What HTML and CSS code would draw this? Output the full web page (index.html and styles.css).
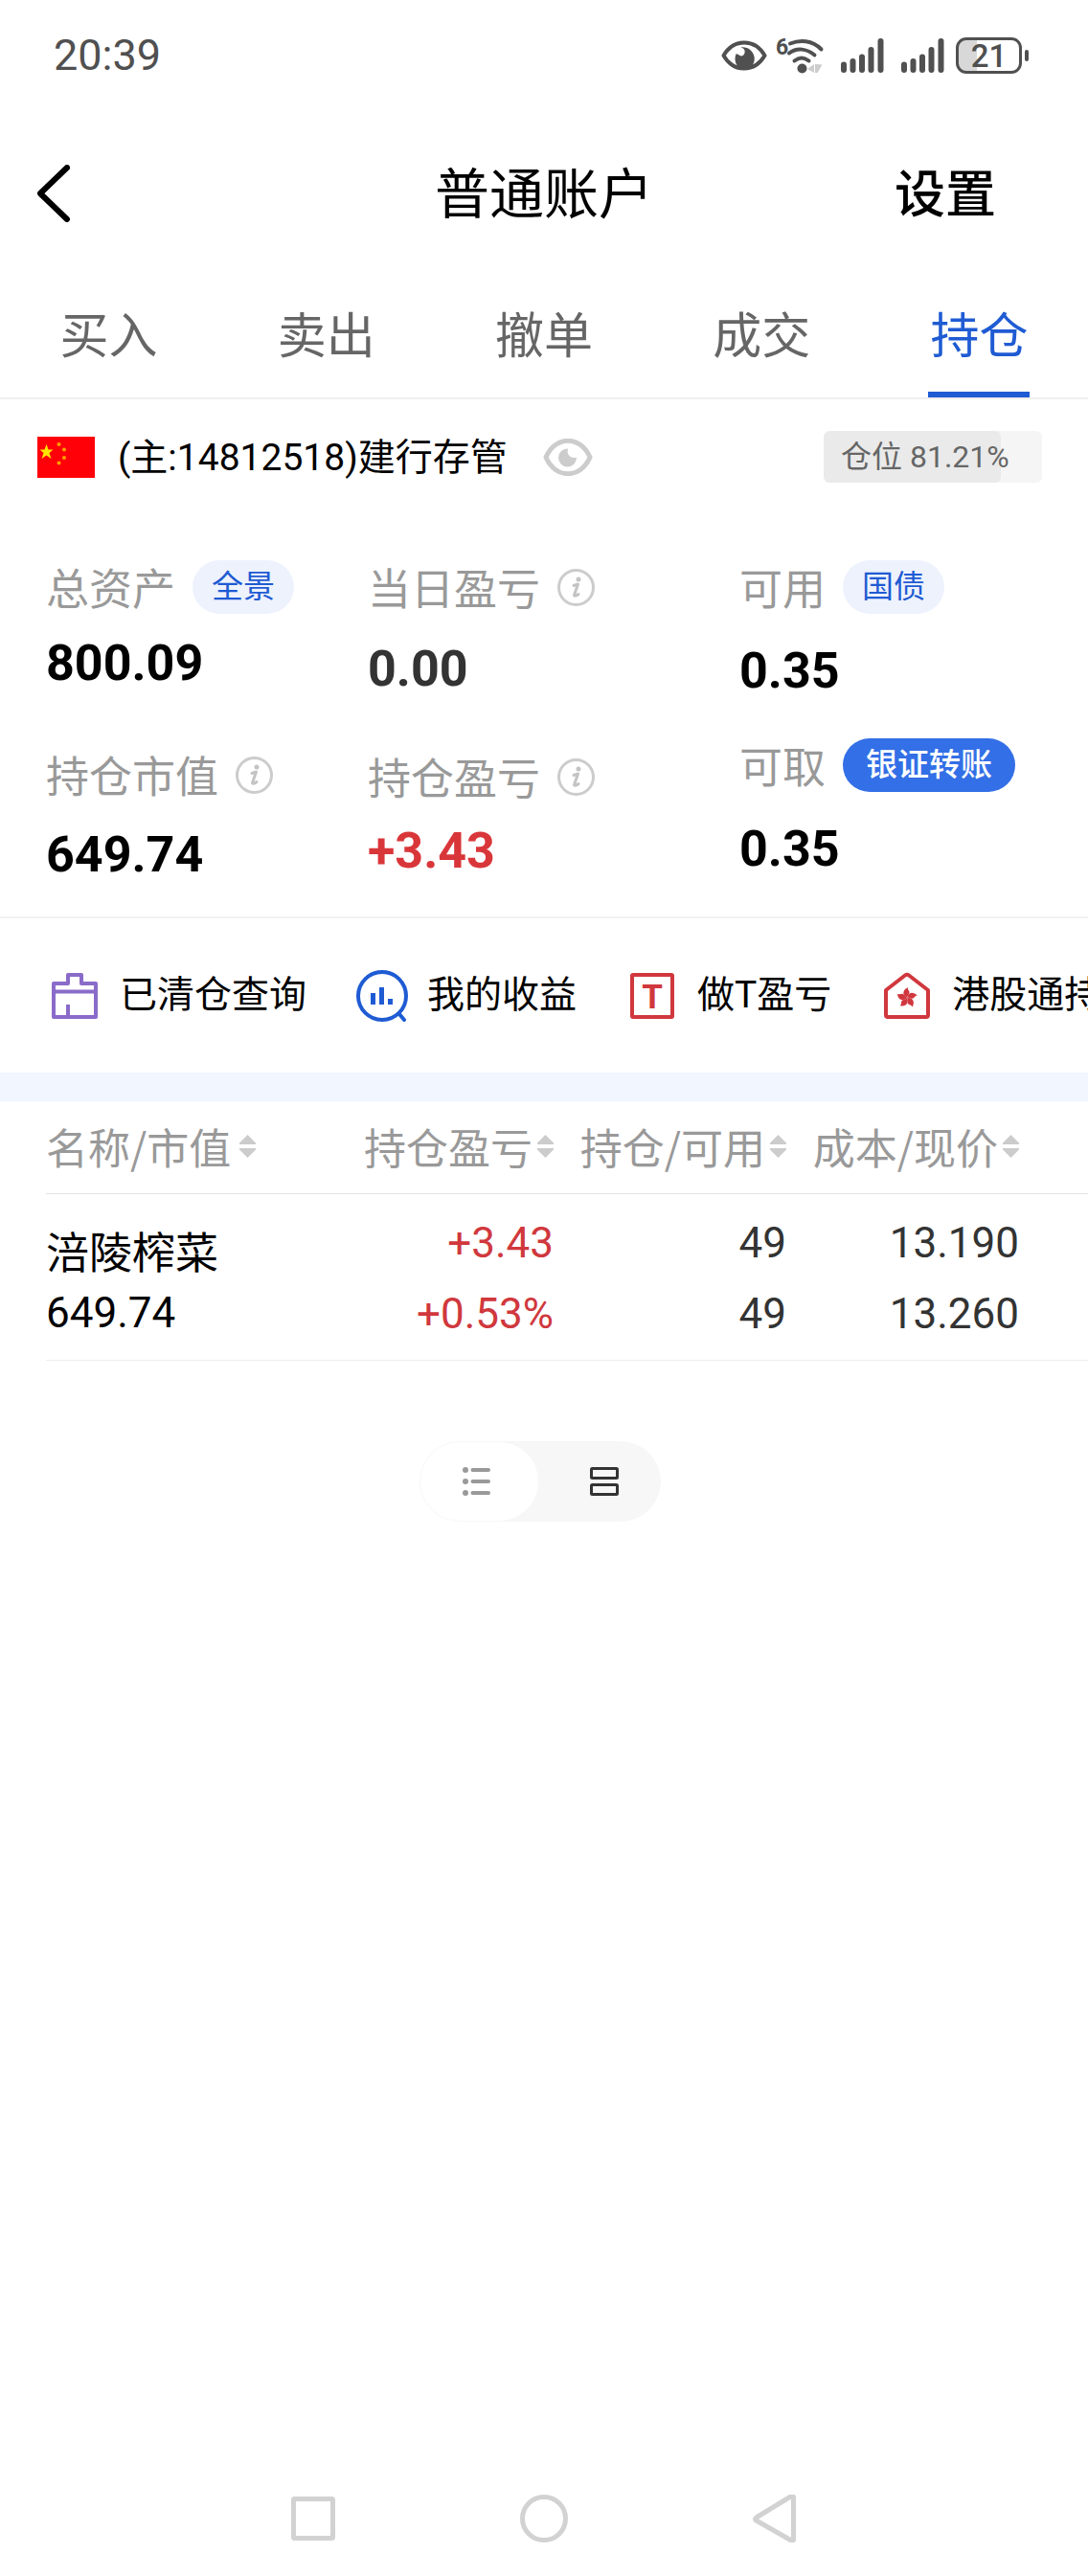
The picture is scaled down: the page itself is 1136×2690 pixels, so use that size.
FILE: index.html
```html
<!DOCTYPE html>
<html lang="zh-CN">
<head>
    <meta charset="UTF-8">
    <meta name="viewport" content="width=device-width, initial-scale=1.0">
    <title>普通账户</title>
    <link rel="stylesheet" href="styles.css">
</head>
<body>
    <!-- Shared icons -->
    <svg class="sprite" aria-hidden="true">
        <symbol id="icon-info" viewBox="0 0 39 39">
            <circle cx="19.5" cy="19.5" r="18" fill="none" stroke="#ccc" stroke-width="3"/>
            <circle cx="22" cy="11" r="2.5" fill="#c4c4c4"/>
            <path d="M17 17.500l4.500-1.500-4 11.500c0 1.500 2.500 .5 4.500-1" fill="none" stroke="#c4c4c4" stroke-width="3" stroke-linecap="round" stroke-linejoin="round"/>
        </symbol>
        <symbol id="icon-sort" viewBox="0 0 17 24">
            <path d="M8.500 0L17 8.500V10H0V8.500zM8.500 24L17 15.500V14H0v1.500z" fill="#ccc"/>
        </symbol>
        <symbol id="icon-signal" viewBox="0 0 45 36">
            <path d="M3 27.500v5.500M12.500 24v9M22 19.500v13.500M31.500 12v21M41.500 3v30" fill="none" stroke="#505050" stroke-width="6" stroke-linecap="round"/>
        </symbol>
    </svg>

    <div class="status-bar">
        <span class="time">20:39</span>
        <div class="status-icons">
            <svg class="status-eye" viewBox="0 0 48 32">
                <path d="M2.500 16C13-2 35-2 45.500 16 35 34 13 34 2.500 16z" fill="none" stroke="#505050" stroke-width="4" stroke-linejoin="round"/>
                <path d="M20.500 7.500c4 1 5 4 3.500 7-1 2-3 2.500-4.500 1.500-2-1-3-2-4-1.500-3 7 1 15.500 8.500 15.500 7 0 12-6 10.500-13-1.500-6-7-10.500-14-9.500z" fill="#505050"/>
            </svg>
            <svg class="status-wifi" viewBox="0 0 50 38">
                <text x="0" y="18" class="wifi-six">6</text>
                <path d="M15 6.500c10-4 23-4 32.500 6" class="wifi-arc"/>
                <path d="M14 16.500c8-6 18-5 26.500 2" class="wifi-arc"/>
                <path d="M19.500 24.500c5-4 10-4 15 0" class="wifi-arc"/>
                <circle cx="27.500" cy="32.500" r="5" fill="#505050"/>
                <path d="M40 28v9l-7-4zM41 28l7.500 .5-5 8.500H41z" fill="#ccc"/>
            </svg>
            <svg class="status-signal"><use href="#icon-signal"/></svg>
            <svg class="status-signal"><use href="#icon-signal"/></svg>
            <div class="battery">
                <span class="battery-body">21</span>
                <span class="battery-cap"></span>
            </div>
        </div>
    </div>

    <header class="header">
        <button class="back" aria-label="返回">
            <svg viewBox="0 0 34 60">
                <path d="M31 3L3 30l28 27" fill="none" stroke="#000" stroke-width="6" stroke-linecap="round" stroke-linejoin="round"/>
            </svg>
        </button>
        <h1>普通账户</h1>
        <a class="settings" href="#">设置</a>
    </header>

    <nav class="tabs">
        <a href="#">买入</a>
        <a href="#">卖出</a>
        <a href="#">撤单</a>
        <a href="#">成交</a>
        <a class="active" href="#" aria-current="page">持仓</a>
    </nav>

    <section class="account">
        <svg class="flag" viewBox="0 0 60 43">
            <rect width="60" height="43" fill="#ff0008"/>
            <path d="M9.500 8l2 5.500h5l-4 3.500 2 6-5-3.500-5 3.500 2-6-4-3.500h5z" fill="#ffe600"/>
            <g fill="#ff9f00">
                <circle cx="22.500" cy="8" r="2"/>
                <circle cx="28" cy="13.500" r="2"/>
                <circle cx="28" cy="22" r="2"/>
                <circle cx="22.500" cy="27.500" r="2"/>
            </g>
        </svg>
        <span class="account-name">(主:14812518)建行存管</span>
        <button class="eye" aria-label="隐藏金额">
            <svg viewBox="0 0 52 39">
                <path d="M3 19.500C13-3.500 39-3.500 49 19.500 39 42.500 13 42.500 3 19.500z" fill="none" stroke="#ccc" stroke-width="5" stroke-linejoin="round"/>
                <path d="M26 10.500a9.500 9.500 0 1 0 9 9c-5 2-11-2-9-9z" fill="#ccc"/>
            </svg>
        </button>
        <div class="position">
            <div class="position-fill" style="width: 81.21%"></div>
            <span class="position-text">仓位 81.21%</span>
        </div>
    </section>

    <section class="summary">
        <div class="column column-total">
            <div class="metric">
                <div class="label">总资产 <button class="pill">全景</button></div>
                <div class="value">800.09</div>
            </div>
            <div class="metric">
                <div class="label">持仓市值 <svg class="info"><use href="#icon-info"/></svg></div>
                <div class="value">649.74</div>
            </div>
        </div>
        <div class="column column-profit">
            <div class="metric">
                <div class="label">当日盈亏 <svg class="info"><use href="#icon-info"/></svg></div>
                <div class="value flat">0.00</div>
            </div>
            <div class="metric">
                <div class="label">持仓盈亏 <svg class="info"><use href="#icon-info"/></svg></div>
                <div class="value up">+3.43</div>
            </div>
        </div>
        <div class="column column-cash">
            <div class="metric">
                <div class="label">可用 <button class="pill">国债</button></div>
                <div class="value">0.35</div>
            </div>
            <div class="metric">
                <div class="label">可取 <button class="pill pill-solid">银证转账</button></div>
                <div class="value">0.35</div>
            </div>
        </div>
    </section>

    <nav class="shortcuts">
        <a href="#">
            <svg viewBox="0 0 54 54">
                <g fill="none" stroke="#8a6bc9" stroke-width="4" stroke-linejoin="round">
                    <path d="M5 14h15V5h14v9h15v35H5z"/>
                    <path d="M5 22.500h44M20 36v13"/>
                </g>
            </svg>
            已清仓查询
        </a>
        <a href="#">
            <svg viewBox="0 0 54 54">
                <circle cx="27" cy="27" r="25" fill="none" stroke="#1f5bd3" stroke-width="4"/>
                <path d="M45 46l5 6" stroke="#1f5bd3" stroke-width="4" stroke-linecap="round"/>
                <path d="M15 24h5v12h-5zM24 18h5v18h-5zM33 30h5v6h-5z" fill="#1f5bd3"/>
            </svg>
            我的收益
        </a>
        <a href="#">
            <svg viewBox="0 0 54 54">
                <rect x="6" y="5" width="42" height="44" rx="1" fill="none" stroke="#d0383d" stroke-width="4"/>
                <text x="27" y="40" class="icon-letter">T</text>
            </svg>
            做T盈亏
        </a>
        <a href="#">
            <svg viewBox="0 0 54 54">
                <path d="M5 21L25 5.500q2-1.500 4 0L49 21v26q0 2-2 2H7q-2 0-2-2z" fill="none" stroke="#d0383d" stroke-width="4" stroke-linejoin="round"/>
                <g fill="#d0383d">
                    <path id="petal" d="M27 29c-5-3-5-8 1-11-1 3 3 4 1 7-1 2-2 2-2 4z"/>
                    <use href="#petal" transform="rotate(72 27 29)"/>
                    <use href="#petal" transform="rotate(144 27 29)"/>
                    <use href="#petal" transform="rotate(216 27 29)"/>
                    <use href="#petal" transform="rotate(288 27 29)"/>
                </g>
            </svg>
            港股通持仓
        </a>
    </nav>

    <main class="holdings">
        <table>
            <thead>
                <tr>
                    <th><button>名称/市值 <svg><use href="#icon-sort"/></svg></button></th>
                    <th><button>持仓盈亏 <svg><use href="#icon-sort"/></svg></button></th>
                    <th><button>持仓/可用 <svg><use href="#icon-sort"/></svg></button></th>
                    <th><button>成本/现价 <svg><use href="#icon-sort"/></svg></button></th>
                </tr>
            </thead>
            <tbody>
                <tr>
                    <td><div class="stock">涪陵榨菜</div><div class="market-value">649.74</div></td>
                    <td class="up"><div>+3.43</div><div>+0.53%</div></td>
                    <td><div>49</div><div>49</div></td>
                    <td><div>13.190</div><div>13.260</div></td>
                </tr>
            </tbody>
        </table>

        <div class="view-toggle">
            <button class="selected" aria-label="列表" aria-pressed="true">
                <svg viewBox="0 0 30 30">
                    <g fill="#999">
                        <circle cx="3" cy="3" r="3"/>
                        <circle cx="3" cy="15" r="3"/>
                        <circle cx="3" cy="27" r="3"/>
                    </g>
                    <path d="M10.500 3H27M10.500 15H27M10.500 27H27" stroke="#999" stroke-width="4" stroke-linecap="round"/>
                </svg>
            </button>
            <button aria-label="卡片" aria-pressed="false">
                <svg viewBox="0 0 30 30">
                    <g fill="none" stroke="#333" stroke-width="3">
                        <rect x="1.500" y="1.500" width="27" height="10" rx="1"/>
                        <rect x="1.500" y="18.500" width="27" height="10" rx="1"/>
                    </g>
                </svg>
            </button>
        </div>
    </main>

    <footer class="system-nav">
        <button aria-label="最近任务">
            <svg viewBox="0 0 50 50"><rect x="4.500" y="4.500" width="41" height="41" rx="1"/></svg>
        </button>
        <button aria-label="主屏幕">
            <svg viewBox="0 0 50 50"><circle cx="25" cy="25" r="22.500"/></svg>
        </button>
        <button aria-label="返回上一级">
            <svg viewBox="0 0 50 50"><path d="M44.500 2.500v45q-1 1-3 0L5.500 27q-2-1.500 0-3L41.500 2q2-1 3 .5z"/></svg>
        </button>
    </footer>
</body>
</html>
```

FILE: styles.css
```css
* {
    box-sizing: border-box;
}
body {
    margin: 0;
    min-height: 100vh;
    display: flex;
    flex-direction: column;
    overflow-x: hidden;
    background: #fff;
    color: #000;
    font-family: Roboto, "Noto Sans CJK SC", sans-serif;
}
a {
    color: inherit;
    text-decoration: none;
}
button {
    padding: 0;
    border: none;
    background: none;
    color: inherit;
    font: inherit;
    cursor: pointer;
}
svg {
    display: block;
    flex-shrink: 0;
}
.sprite {
    width: 0;
    height: 0;
    position: absolute;
}

/* Status bar */
.status-bar {
    display: flex;
    align-items: center;
    justify-content: space-between;
    height: 116px;
    padding: 0 62px 0 56px;
    color: #505050;
}
.time {
    font-size: 45px;
    line-height: 56px;
}
.status-icons {
    display: flex;
    align-items: center;
}
.status-eye {
    width: 48px;
    height: 32px;
    margin-right: 9px;
}
.status-wifi {
    width: 50px;
    height: 38px;
    margin-right: 18px;
    overflow: visible;
}
.status-signal {
    width: 45px;
    height: 36px;
    margin-right: 18px;
}
.status-signal:nth-of-type(4) {
    margin-right: 12px;
}
.wifi-six {
    font-size: 23px;
    font-weight: 700;
    fill: #505050;
}
.wifi-arc {
    fill: none;
    stroke: #505050;
    stroke-width: 4;
    stroke-linecap: round;
}
.battery {
    display: flex;
    align-items: center;
    gap: 3px;
}
.battery-body {
    width: 69px;
    height: 38px;
    border: 3px solid #505050;
    border-radius: 11px;
    background: linear-gradient(90deg, #d8d8d8 30%, #fff 30%);
    font-size: 33px;
    font-weight: 500;
    line-height: 34px;
    text-align: center;
}
.battery-cap {
    width: 4px;
    height: 12px;
    border-radius: 2px;
    background: #505050;
}

/* Header */
.header {
    display: grid;
    grid-template-columns: 1fr auto 1fr;
    align-items: center;
    height: 172px;
    padding: 0 96px 0 39px;
}
.back {
    width: 34px;
}
.header h1 {
    margin: 0;
    padding: 3px 0 0 57px;
    font-size: 57px;
    font-weight: 400;
    line-height: 72px;
}
.settings {
    justify-self: end;
    padding-top: 3px;
    font-size: 53px;
    font-weight: 500;
    line-height: 72px;
}

/* Tabs */
.tabs {
    display: grid;
    grid-template-columns: repeat(5, 1fr);
    justify-items: center;
    border-bottom: 2px solid #eee;
    color: #666;
    font-size: 51px;
    line-height: 115px;
}
.tabs a {
    padding: 6px 2px 0;
    border-bottom: 6px solid transparent;
}
.tabs .active {
    border-bottom-color: #1f5bd3;
    color: #1f5bd3;
}

/* Account row */
.account {
    display: flex;
    align-items: center;
    height: 120px;
    padding: 0 48px 0 39px;
}
.flag {
    width: 60px;
    height: 43px;
}
.account-name {
    margin: 0 37px 0 24px;
    padding-top: 2px;
    font-size: 39px;
    line-height: 56px;
}
.eye svg {
    width: 52px;
    height: 39px;
}
.position {
    position: relative;
    margin-left: auto;
    width: 228px;
    border-radius: 6px;
    overflow: hidden;
    background: #f5f5f5;
    color: #666;
    font-size: 32px;
    line-height: 54px;
}
.position-fill {
    position: absolute;
    inset: 0 auto 0 0;
    border-radius: 6px;
    background: #eaeaea;
}
.position-text {
    position: relative;
    padding-left: 18px;
}

/* Summary */
.summary {
    display: grid;
    grid-template-columns: 336fr 388fr 316fr;
    padding: 48px 48px 36px;
    border-bottom: 2px solid #f2f2f2;
}
.column {
    display: flex;
    flex-direction: column;
}
.metric {
    display: flex;
    flex-direction: column;
}
.column-total {
    gap: 60px;
}
.column-total .metric {
    gap: 24px;
}
.column-total .metric:last-child {
    gap: 28px;
}
.column-profit {
    gap: 56px;
}
.column-profit .metric {
    gap: 30px;
}
.column-profit .metric:last-child {
    gap: 22px;
}
.column-cash {
    gap: 42px;
}
.column-cash .metric {
    gap: 32px;
}
.label {
    display: flex;
    align-items: center;
    gap: 18px;
    color: #999;
    font-family: "Noto Sans CJK SC", sans-serif;
    font-size: 45px;
    line-height: 56px;
}
.info {
    width: 39px;
    height: 39px;
}
.pill {
    padding: 0 20px;
    border-radius: 28px;
    background: #edf2fd;
    color: #1f5bd3;
    font-family: Roboto, "Noto Sans CJK SC", sans-serif;
    font-size: 33px;
    line-height: 56px;
}
.pill-solid {
    padding: 0 24px;
    background: #336fe6;
    color: #fff;
    font-weight: 500;
}
.value {
    font-size: 52px;
    font-weight: 700;
    line-height: 56px;
}
.flat {
    color: #333;
}
.value.up {
    color: #d9363a;
}

/* Shortcuts */
.shortcuts {
    display: flex;
    gap: 52px;
    padding-left: 51px;
    overflow: hidden;
    border-bottom: 30px solid #f2f6ff;
    font-size: 39px;
    line-height: 161px;
    white-space: nowrap;
}
.shortcuts a {
    display: flex;
    align-items: center;
    gap: 20px;
}
.shortcuts svg {
    width: 54px;
    height: 54px;
}
.icon-letter {
    fill: #d0383d;
    font-size: 35px;
    font-weight: 700;
    text-anchor: middle;
}

/* Holdings */
.holdings {
    flex: 1;
    padding-left: 48px;
}
table {
    width: 100%;
    border-collapse: separate;
    border-spacing: 0;
    table-layout: fixed;
    font-size: 44px;
}
th,
td {
    padding: 0;
    text-align: right;
    white-space: nowrap;
}
th:first-child,
td:first-child {
    text-align: left;
}
th:nth-child(2) {
    width: 247px;
}
th:nth-child(3) {
    width: 243px;
}
th:last-child {
    width: 315px;
}
th:last-child,
td:last-child {
    padding-right: 72px;
}
th {
    padding-bottom: 2px;
    border-bottom: 1px solid #e3e3e3;
    color: #999;
    font-family: "Noto Sans CJK SC", sans-serif;
    font-weight: 400;
    line-height: 94px;
}
th button {
    display: inline-flex;
    align-items: center;
    gap: 5px;
    vertical-align: top;
}
th:first-child button {
    gap: 9px;
}
th svg {
    width: 17px;
    height: 24px;
}
td {
    padding: 14px 0 11px;
    border-bottom: 1px solid #eee;
    color: #333;
    line-height: 74px;
}
td.up {
    color: #d0383d;
}
td:first-child {
    padding: 22px 0 21px;
    color: #000;
}
.stock {
    font-family: "Noto Sans CJK SC", sans-serif;
    font-size: 45px;
}
.market-value {
    line-height: 56px;
}
.view-toggle {
    display: flex;
    width: 252px;
    height: 84px;
    margin: 84px auto 0 calc(50% - 154px);
    border-radius: 42px;
    background: #f7f7f7;
}
.view-toggle button {
    flex: 1;
    display: flex;
    align-items: center;
    justify-content: center;
    margin: 1px;
    padding-left: 8px;
    border-radius: 42px;
}
.view-toggle .selected {
    padding: 0 6px 0 0;
    background: #fff;
}
.view-toggle svg {
    width: 30px;
    height: 30px;
}

/* System navigation */
.system-nav {
    display: flex;
    align-items: center;
    justify-content: center;
    gap: 191px;
    height: 120px;
}
.system-nav svg {
    width: 50px;
    height: 50px;
    fill: none;
    stroke: #d2d2d2;
    stroke-width: 5;
    stroke-linejoin: round;
}
```
